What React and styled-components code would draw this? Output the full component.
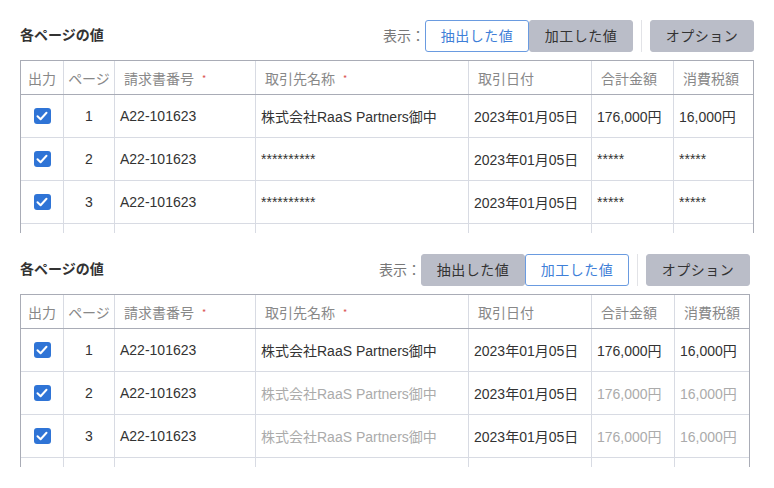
import React from "react";
import styled, { createGlobalStyle } from "styled-components";

const Global = createGlobalStyle`
  html, body { margin: 0; padding: 0; background: #fff; }
  body {
    font-family: "Liberation Sans", "Noto Sans CJK JP", sans-serif;
    color: #333;
    -webkit-font-smoothing: antialiased;
  }
`;

const Page = styled.div`
  display: flex;
  flex-direction: column;
  padding-left: 20px;
`;

const Section = styled.section`
  width: ${(p) => p.$width}px;
  height: 234px;
  box-sizing: border-box;
  padding-top: 20px;
  display: flex;
  flex-direction: column;
  gap: 8px;
`;

const HeaderBar = styled.div`
  display: flex;
  align-items: center;
  justify-content: space-between;
  height: 32px;
`;

const Title = styled.h2`
  margin: 0 0 5px 0;
  font-size: 14px;
  line-height: 20px;
  font-weight: 700;
  color: #333;
  font-family: "Noto Sans CJK JP", sans-serif;
`;

const Toolbar = styled.div`
  display: flex;
  align-items: center;
  height: 32px;
`;

const Label = styled.span`
  font-size: 14px;
  line-height: 20px;
  margin-bottom: 3px;
  color: #777;
  font-family: "Noto Sans CJK JP", sans-serif;
`;

const Group = styled.div`
  display: flex;
`;

const Button = styled.button`
  width: 104px;
  height: 32px;
  box-sizing: border-box;
  border-radius: 3px;
  font-family: "Noto Sans CJK JP", sans-serif;
  font-size: 14px;
  line-height: 20px;
  letter-spacing: 0.5px;
  cursor: pointer;
  padding: 0 0 3px 0;
  border: 1px solid ${(p) => (p.$active ? "#6a9be0" : "#babdc8")};
  background: ${(p) => (p.$active ? "#fff" : "#babdc8")};
  color: ${(p) => (p.$active ? "#3f7fd8" : "#333")};
`;

const Separator = styled.div`
  width: 1px;
  height: 32px;
  background: #e2e3e7;
  margin: 0 8px;
`;

const TableBox = styled.div`
  height: 173px;
  box-sizing: border-box;
  border: 1px solid #a9acb6;
  border-bottom: none;
  overflow: hidden;
`;

const Row = styled.div`
  display: grid;
  grid-template-columns: ${(p) => p.$cols};
  height: ${(p) => (p.$head ? 33 : 42)}px;
  border-bottom: 1px solid ${(p) => (p.$head ? "#a9acb6" : "#d8dbe3")};
`;

const Cell = styled.div`
  display: flex;
  align-items: center;
  justify-content: ${(p) => (p.$center ? "center" : "flex-start")};
  padding-left: ${(p) => (p.$center ? 0 : p.$head ? 9 : 5)}px;
  border-left: 1px solid #d8dbe3;
  font-size: 14px;
  white-space: nowrap;
  overflow: hidden;
  color: ${(p) => (p.$head ? "#888" : p.$muted ? "#ababab" : "#333")};
  font-family: ${(p) =>
    p.$head ? `"Noto Sans CJK JP", sans-serif` : `"Liberation Sans", "Noto Sans CJK JP", sans-serif`};
  &:first-child { border-left: none; }
`;

const Required = styled.span`
  color: #d9534f;
  font-size: 9px;
  margin-left: 8px;
  margin-top: 1px;
`;

const Check = styled.span`
  width: 17px;
  height: 16px;
  border-radius: 3px;
  background: #2f74d6;
  display: flex;
  align-items: center;
  justify-content: center;
`;

const CheckBox = () => (
  <Check>
    <svg width="12" height="10" viewBox="0 0 12 10">
      <path d="M1.5 5.2 L4.6 8.2 L10.5 1.8" fill="none" stroke="#fff" strokeWidth="2" strokeLinecap="round" strokeLinejoin="round" />
    </svg>
  </Check>
);

const headers = [
  { t: "出力", c: true },
  { t: "ページ", c: true },
  { t: "請求書番号", r: true },
  { t: "取引先名称", r: true },
  { t: "取引日付" },
  { t: "合計金額" },
  { t: "消費税額" },
];

const PanelTable = ({ cols, rows }) => (
  <TableBox>
    <Row $cols={cols} $head>
      {headers.map((h) => (
        <Cell key={h.t} $head $center={h.c}>
          {h.t}
          {h.r && <Required>*</Required>}
        </Cell>
      ))}
    </Row>
    {rows.map((r, i) => (
      <Row $cols={cols} key={i}>
        <Cell $center>{r.check && <CheckBox />}</Cell>
        <Cell $center>{r.page}</Cell>
        <Cell>{r.no}</Cell>
        <Cell $muted={r.muted}>{r.name}</Cell>
        <Cell>{r.date}</Cell>
        <Cell $muted={r.muted}>{r.total}</Cell>
        <Cell $muted={r.muted}>{r.tax}</Cell>
      </Row>
    ))}
  </TableBox>
);

const extracted = [
  { check: true, page: "1", no: "A22-101623", name: "株式会社RaaS Partners御中", date: "2023年01月05日", total: "176,000円", tax: "16,000円" },
  { check: true, page: "2", no: "A22-101623", name: "**********", date: "2023年01月05日", total: "*****", tax: "*****" },
  { check: true, page: "3", no: "A22-101623", name: "**********", date: "2023年01月05日", total: "*****", tax: "*****" },
  {},
];

const processed = [
  { check: true, page: "1", no: "A22-101623", name: "株式会社RaaS Partners御中", date: "2023年01月05日", total: "176,000円", tax: "16,000円" },
  { check: true, page: "2", no: "A22-101623", name: "株式会社RaaS Partners御中", date: "2023年01月05日", total: "176,000円", tax: "16,000円", muted: true },
  { check: true, page: "3", no: "A22-101623", name: "株式会社RaaS Partners御中", date: "2023年01月05日", total: "176,000円", tax: "16,000円", muted: true },
  {},
];

const Panel = ({ width, cols, active, rows }) => (
  <Section $width={width}>
    <HeaderBar>
      <Title>各ページの値</Title>
      <Toolbar>
        <Label>表示：</Label>
        <Group>
          <Button $active={active === 0}>抽出した値</Button>
          <Button $active={active === 1}>加工した値</Button>
        </Group>
        <Separator />
        <Button>オプション</Button>
      </Toolbar>
    </HeaderBar>
    <PanelTable cols={cols} rows={rows} />
  </Section>
);

export default function App() {
  return (
    <>
      <Global />
      <Page>
        <Panel width={734} cols="42px 51px 141px 213px 123px 82px 1fr" active={0} rows={extracted} />
        <Panel width={730} cols="42px 51px 141px 213px 123px 83px 1fr" active={1} rows={processed} />
      </Page>
    </>
  );
}
